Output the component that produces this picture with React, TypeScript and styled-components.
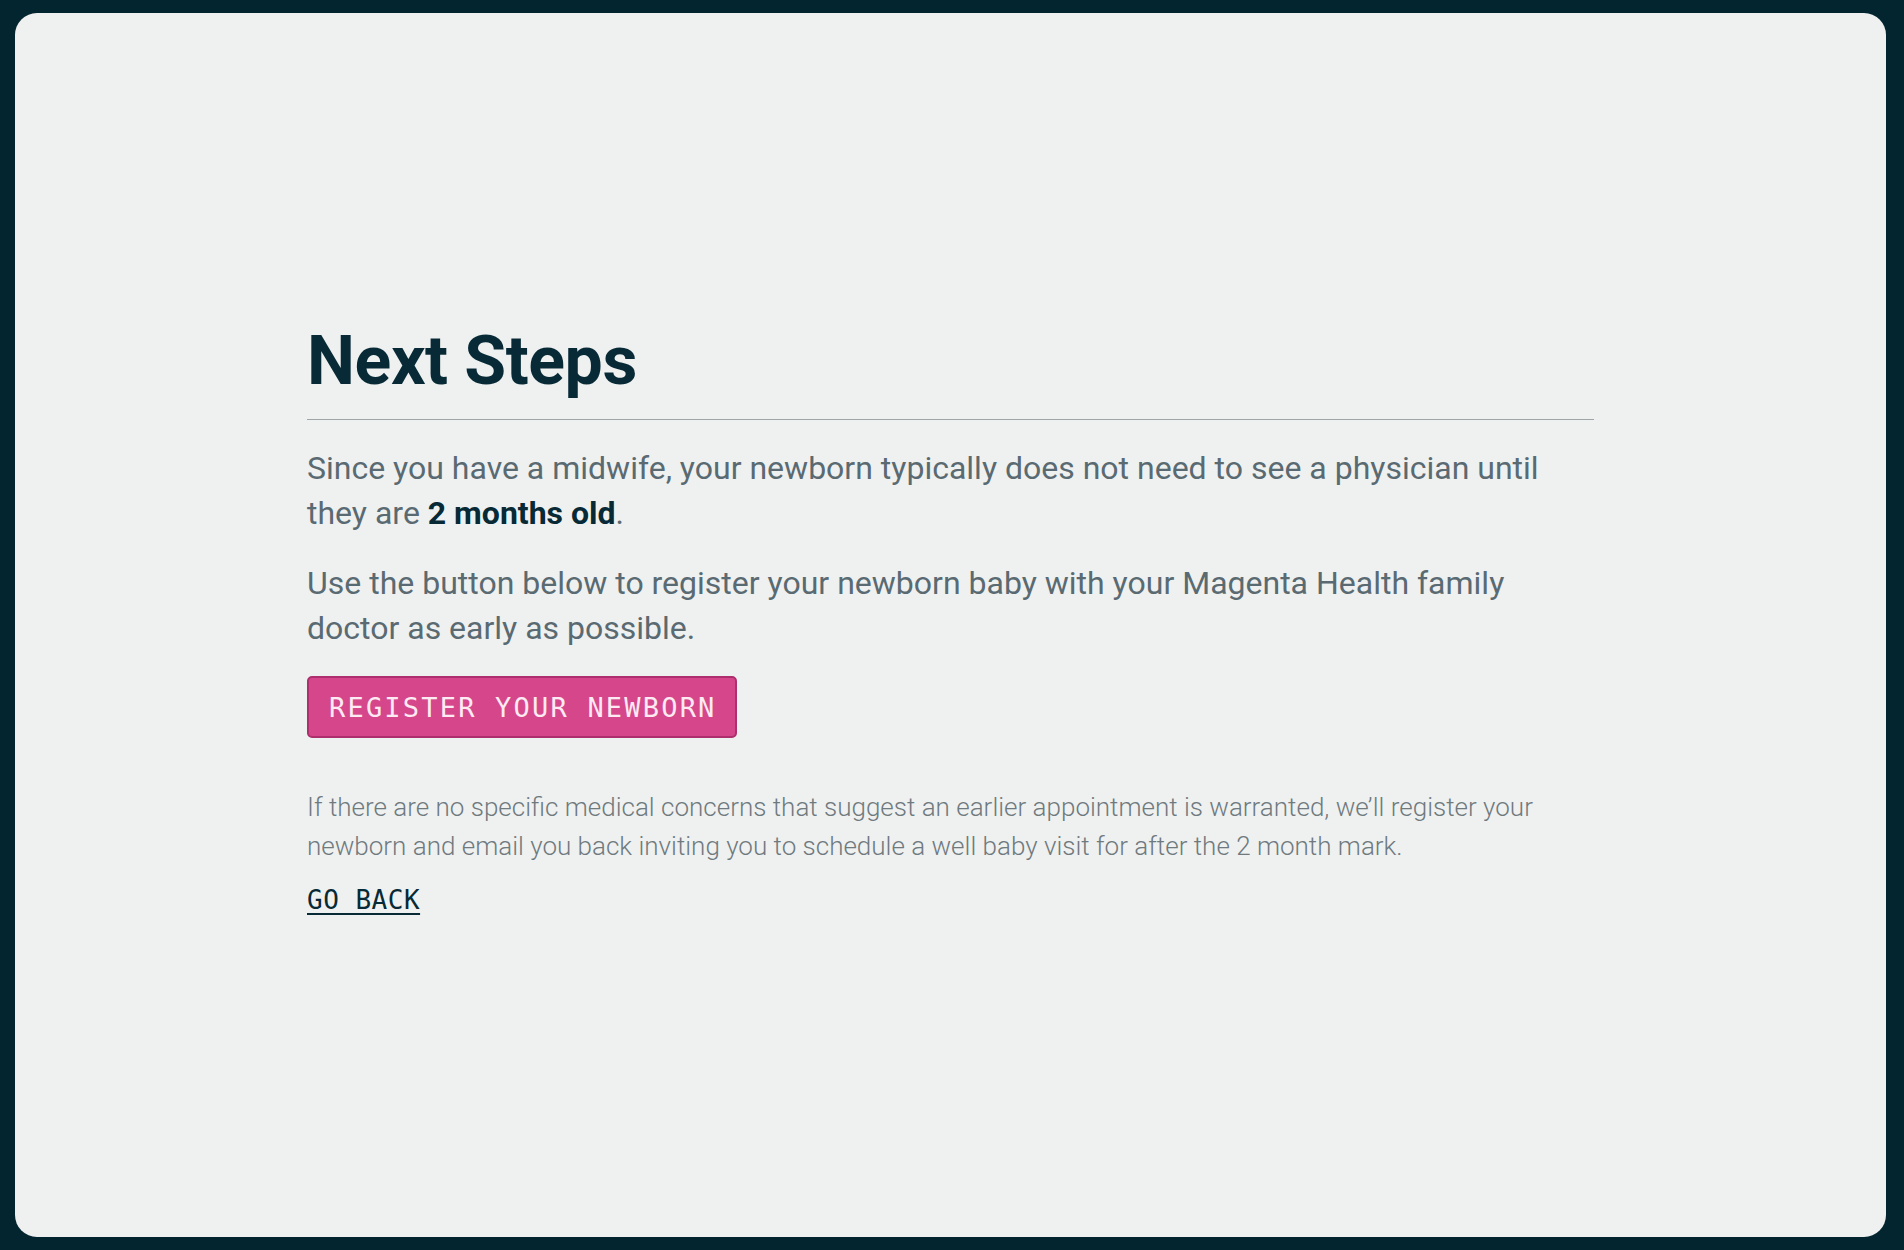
import styled, { createGlobalStyle } from 'styled-components'

const GlobalStyle = createGlobalStyle`
  html, body {
    margin: 0;
    padding: 0;
    background: #022530;
  }
  * {
    box-sizing: border-box;
  }
`

const Page = styled.div`
  height: 100vh;
  padding: 13px 18px 13px 15px;
  background: #022530;
`

const Card = styled.main`
  height: 100%;
  background: #eff1f0;
  border-radius: 22px;
  display: flex;
  align-items: center;
  justify-content: center;
`

const Content = styled.section`
  width: 1287px;
  margin-top: -3px;
`

const Title = styled.h1`
  margin: 0;
  font-family: Roboto, 'Noto Sans', sans-serif;
  font-weight: 700;
  font-size: 68px;
  line-height: 68px;
  color: #072a36;
  letter-spacing: -0.4px;
`

const Divider = styled.hr`
  margin: 24px 0 26px;
  border: 0;
  border-top: 1px solid #9ea6a8;
`

const Lead = styled.p`
  margin: 0 0 25px;
  font-family: Roboto, 'Noto Sans', sans-serif;
  font-size: 32px;
  line-height: 45px;
  color: #5a6a72;

  strong {
    font-weight: 700;
    color: #072a36;
  }
`

const RegisterButton = styled.button`
  display: block;
  margin: 24px 0 50px;
  width: 430px;
  height: 62px;
  padding: 0 0 0 20px;
  text-align: left;
  background: #d5468a;
  border: 2px solid #ad2f6d;
  border-radius: 5px;
  color: #fdeaf3;
  font-family: 'DejaVu Sans Mono', 'Liberation Mono', monospace;
  font-size: 27px;
  letter-spacing: 2.2px;
  cursor: pointer;
`

const Note = styled.p`
  margin: 0 0 15px;
  font-family: Roboto, 'Noto Sans', sans-serif;
  font-weight: 300;
  font-size: 26px;
  line-height: 39px;
  color: #6f7a7f;
`

const BackLink = styled.a`
  display: inline-block;
  font-family: 'DejaVu Sans Mono', 'Liberation Mono', monospace;
  font-size: 26px;
  line-height: 39px;
  color: #072a36;
  text-decoration: underline;
  text-underline-offset: 4px;
  text-decoration-thickness: 2px;
  letter-spacing: 0.5px;
  cursor: pointer;
`

export default function App() {
  return (
    <Page>
      <GlobalStyle />
      <Card>
        <Content>
          <Title>Next Steps</Title>
          <Divider />
          <Lead>
            Since you have a midwife, your newborn typically does not need to see a physician until
            they are <strong>2 months old</strong>.
          </Lead>
          <Lead>
            Use the button below to register your newborn baby with your Magenta Health family doctor
            as early as possible.
          </Lead>
          <RegisterButton type="button">REGISTER YOUR NEWBORN</RegisterButton>
          <Note>
            If there are no specific medical concerns that suggest an earlier appointment is warranted,
            we’ll register your newborn and email you back inviting you to schedule a well baby visit
            for after the 2 month mark.
          </Note>
          <BackLink>GO BACK</BackLink>
        </Content>
      </Card>
    </Page>
  )
}
